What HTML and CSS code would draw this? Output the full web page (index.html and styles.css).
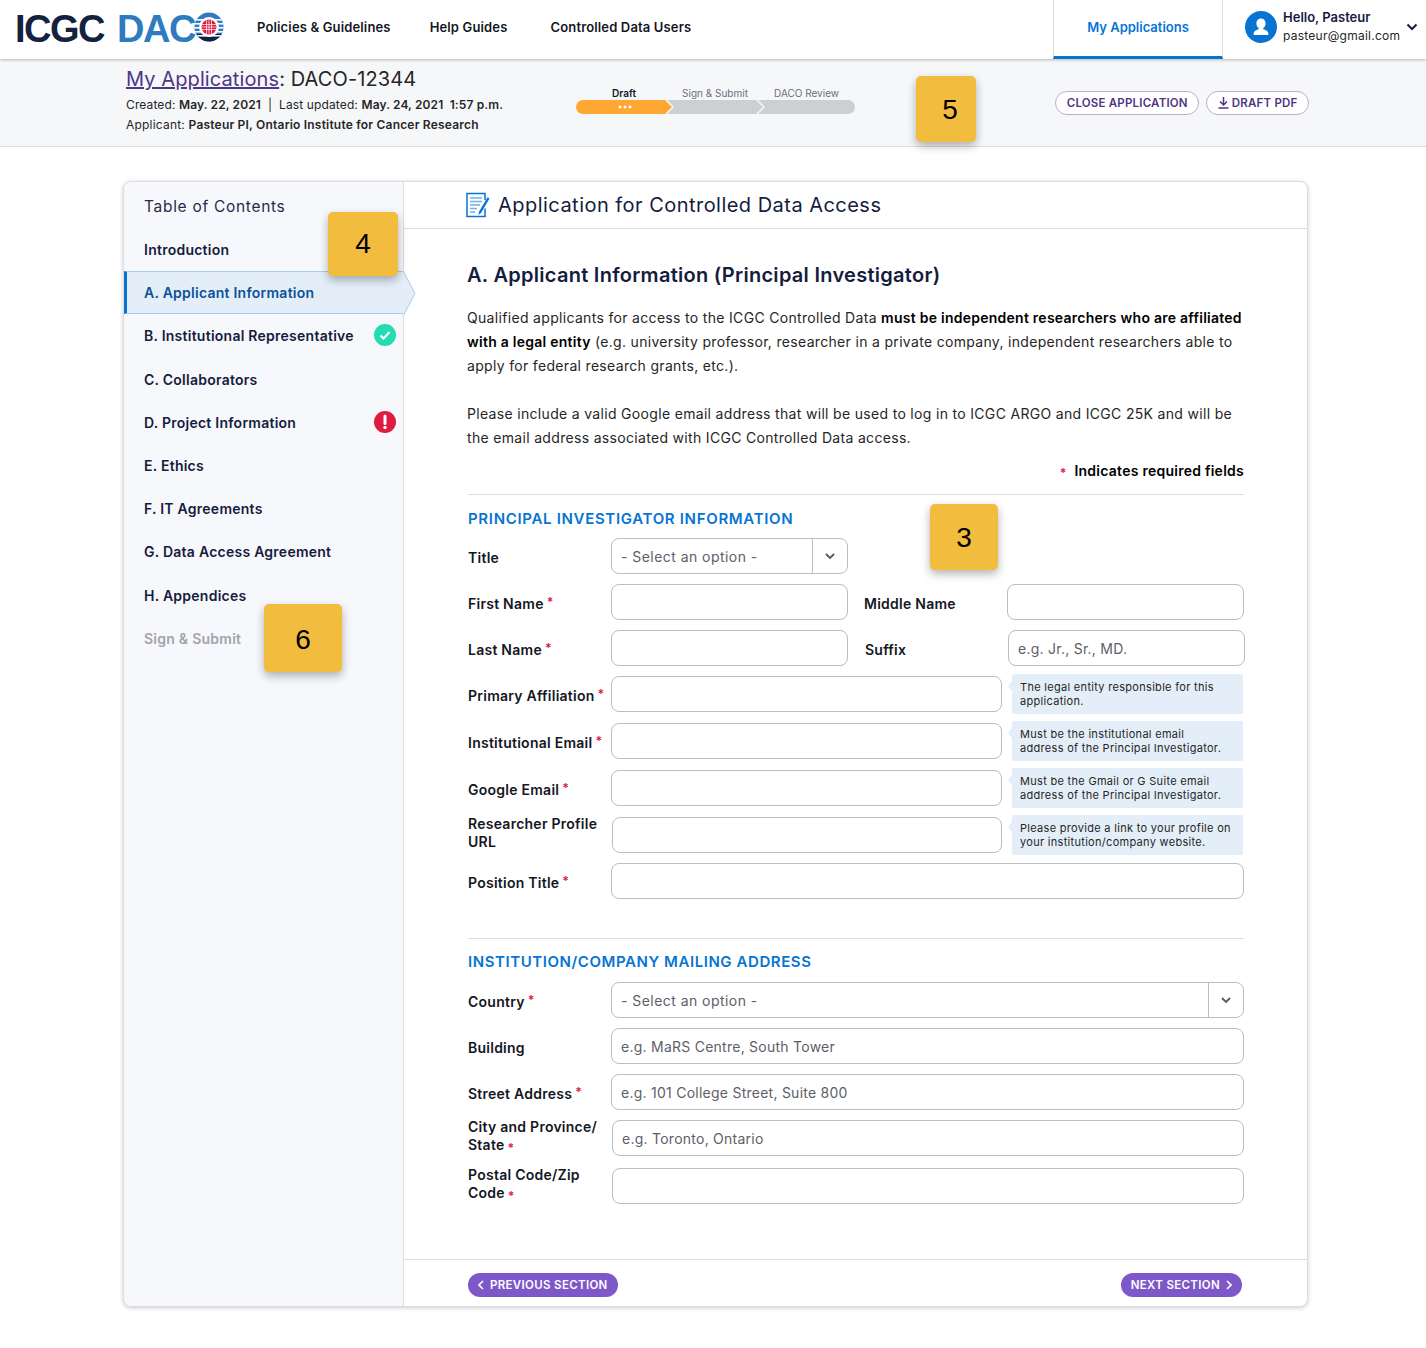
FILE: index.html
```html
<!DOCTYPE html>
<html lang="en">
<head>
    <meta charset="UTF-8">
    <meta name="viewport" content="width=device-width, initial-scale=1.0">
    <title>Application for Controlled Data Access</title>
    <link rel="stylesheet" href="styles.css">
</head>
<body>

    <header class="topbar">
        <div class="logo">
            <span class="logo-dark">ICGC</span>
            <span class="logo-blue">DAC</span>
            <svg class="globe" width="30" height="30" viewBox="0 0 30 30">
                <defs><clipPath id="globeClip"><circle cx="15" cy="15" r="14.5"/></clipPath></defs>
                <g clip-path="url(#globeClip)">
                    <rect width="30" height="15" fill="#2f7bbf"/>
                    <rect y="15" width="30" height="15" fill="#2f7bbf"/>
                    <rect y="22" width="30" height="8" fill="#14213f"/>
                    <rect y="7" width="30" height="1.6" fill="#fff"/>
                    <rect y="11" width="30" height="1.6" fill="#fff"/>
                    <rect y="15" width="30" height="1.6" fill="#fff"/>
                    <rect y="19" width="30" height="1.6" fill="#fff"/>
                    <rect y="23" width="30" height="1.6" fill="#fff"/>
                </g>
                <circle cx="15" cy="15" r="10" fill="#fff"/>
                <circle cx="15" cy="15" r="7.5" fill="#df1b41"/>
                <path d="M7.5 12.5h15M7.5 15h15M7.5 17.5h15M12.5 7.5v15M15 7.5v15M17.5 7.5v15" stroke="#fff" stroke-width=".7" fill="none"/>
            </svg>
        </div>
        <nav class="main-nav">
            <a class="nav-policies">Policies &amp; Guidelines</a>
            <a class="nav-help">Help Guides</a>
            <a>Controlled Data Users</a>
        </nav>
        <a class="tab-active">My Applications</a>
        <div class="user-menu">
            <svg class="avatar" width="32" height="32" viewBox="0 0 32 32">
                <circle cx="16" cy="16" r="16" fill="#0774d3"/>
                <path d="M16 7.5c-2.9 0-4.6 2.2-4.6 4.9 0 2 .9 3.7 2.3 4.7v1.1c-1.9.7-5 1.6-5 4.1v1.7h14.6v-1.7c0-2.5-3.100-3.400-5-4.100v-1.100c1.400-1 2.300-2.700 2.300-4.700 0-2.700-1.700-4.900-4.600-4.900z" fill="#fff"/>
            </svg>
            <div class="user-text">
                <div class="user-name">Hello, Pasteur</div>
                <div class="user-mail">pasteur@gmail.com</div>
            </div>
            <svg class="user-caret" width="12" height="8" viewBox="0 0 12 8"><path d="M1.500 1.500 6 6l4.500-4.500" fill="none" stroke="#151c3d" stroke-width="2"/></svg>
        </div>
    </header>

    <section class="subbar">
        <div class="app-info">
            <h1><a>My Applications</a>: DACO-12344</h1>
            <p class="app-dates">Created: <b>May. 22, 2021</b> &nbsp;|&nbsp; Last updated: <b>May. 24, 2021 &nbsp;1:57 p.m.</b></p>
            <p>Applicant: <b>Pasteur PI, Ontario Institute for Cancer Research</b></p>
        </div>
        <div class="stepper">
            <div class="step-labels">
                <span class="step-current">Draft</span>
                <span>Sign &amp; Submit</span>
                <span>DACO Review</span>
            </div>
            <svg width="279" height="14" viewBox="0 0 279 14">
                <path d="M90 0h182a7 7 0 0 1 0 14H90z" fill="#cecfd3"/>
                <path d="M7 0h83l7 7-7 7H7a7 7 0 0 1 0-14z" fill="#ffa733"/>
                <path d="M90 0l7 7-7 7M181 0l7 7-7 7" fill="none" stroke="#f6f7f9" stroke-width="1.500"/>
                <circle cx="44" cy="7" r="1.500" fill="#fff"/><circle cx="49" cy="7" r="1.500" fill="#fff"/><circle cx="54" cy="7" r="1.500" fill="#fff"/>
            </svg>
        </div>
        <div class="app-actions">
            <button class="btn-outline">CLOSE APPLICATION</button>
            <button class="btn-outline btn-pdf">
                <svg width="11" height="12" viewBox="0 0 11 12"><path d="M5.500 0v7.500M2 4.500l3.500 3.500L9 4.500M.5 11h10" fill="none" stroke="#4f3585" stroke-width="1.500"/></svg>
                DRAFT PDF
            </button>
        </div>
    </section>

    <main class="card">
        <aside class="sidebar">
            <h3>Table of Contents</h3>
            <ul class="toc">
                <li>Introduction</li>
                <li class="active">
                    A. Applicant Information
                    <svg class="active-tip" width="13" height="45" viewBox="0 0 13 45"><path d="M0 .5h.5L12 22.500.5 44.500H0" fill="#e4eef8" stroke="#a2cdf1"/></svg>
                </li>
                <li>B. Institutional Representative
                    <svg class="toc-icon" width="22" height="22" viewBox="0 0 22 22"><circle cx="11" cy="11" r="11" fill="#24dbb4"/><path d="M6.500 11.500l3 3 6-6.500" fill="none" stroke="#fff" stroke-width="2.200"/></svg>
                </li>
                <li>C. Collaborators</li>
                <li>D. Project Information
                    <svg class="toc-icon" width="22" height="22" viewBox="0 0 22 22"><circle cx="11" cy="11" r="11" fill="#df1b41"/><path d="M11 5v7.500" stroke="#fff" stroke-width="3" stroke-linecap="round"/><circle cx="11" cy="16.500" r="1.700" fill="#fff"/></svg>
                </li>
                <li>E. Ethics</li>
                <li>F. IT Agreements</li>
                <li>G. Data Access Agreement</li>
                <li>H. Appendices</li>
                <li class="disabled">Sign &amp; Submit</li>
            </ul>
        </aside>

        <div class="content">
            <div class="content-head">
                <svg width="25" height="26" viewBox="0 0 25 26">
                    <path d="M19 8V1.500H1v23h18v-8" fill="#fff" stroke="#0774d3" stroke-width="1.500"/>
                    <path d="M4 6h12M4 9.500h12M4 13h10M4 16.500h7M4 20h5" stroke="#6db0ea" stroke-width="1.500"/>
                    <path d="M23.500 6.500 15 21l-2.500 2 .5-3.200 8.500-14.500z" fill="#0774d3"/>
                </svg>
                <h2>Application for Controlled Data Access</h2>
            </div>

            <div class="content-body">
                <h2 class="section-title">A. Applicant Information (Principal Investigator)</h2>
                <p class="intro">Qualified applicants for access to the ICGC Controlled Data <b>must be independent researchers who are affiliated with a legal entity</b> (e.g. university professor, researcher in a private company, independent researchers able to apply for federal research grants, etc.).</p>
                <p class="intro">Please include a valid Google email address that will be used to log in to ICGC ARGO and ICGC 25K and will be the email address associated with ICGC Controlled Data access.</p>
                <p class="required-note"><span class="req">*</span> Indicates required fields</p>

                <h4 class="form-heading">PRINCIPAL INVESTIGATOR INFORMATION</h4>

                <div class="form-row">
                    <label>Title</label>
                    <div class="select half"><span>- Select an option -</span><i><svg width="10" height="7" viewBox="0 0 10 7"><path d="M1 1l4 4 4-4" fill="none" stroke="#525767" stroke-width="1.800"/></svg></i></div>
                </div>
                <div class="form-row">
                    <label>First Name<span class="req">*</span></label>
                    <input class="half" type="text">
                    <label class="label-second">Middle Name</label>
                    <input class="half" type="text">
                </div>
                <div class="form-row">
                    <label>Last Name<span class="req">*</span></label>
                    <input class="half" type="text">
                    <label class="label-second label-suffix">Suffix</label>
                    <input class="half" type="text" placeholder="e.g. Jr., Sr., MD.">
                </div>
                <div class="form-row row-tip">
                    <label>Primary Affiliation<span class="req">*</span></label>
                    <input class="with-tip" type="text">
                    <div class="tip">The legal entity responsible for this application.</div>
                </div>
                <div class="form-row row-tip">
                    <label>Institutional Email<span class="req">*</span></label>
                    <input class="with-tip" type="text">
                    <div class="tip">Must be the institutional email<br>address of the Principal Investigator.</div>
                </div>
                <div class="form-row row-tip">
                    <label>Google Email<span class="req">*</span></label>
                    <input class="with-tip" type="text">
                    <div class="tip">Must be the Gmail or G Suite email<br>address of the Principal Investigator.</div>
                </div>
                <div class="form-row row-tip row-tall">
                    <label class="two-line">Researcher Profile URL</label>
                    <input class="with-tip" type="text">
                    <div class="tip">Please provide a link to your profile on your institution/company website.</div>
                </div>
                <div class="form-row">
                    <label>Position Title<span class="req">*</span></label>
                    <input type="text">
                </div>

                <h4 class="form-heading second">INSTITUTION/COMPANY MAILING ADDRESS</h4>

                <div class="form-row">
                    <label>Country<span class="req">*</span></label>
                    <div class="select"><span>- Select an option -</span><i><svg width="10" height="7" viewBox="0 0 10 7"><path d="M1 1l4 4 4-4" fill="none" stroke="#525767" stroke-width="1.800"/></svg></i></div>
                </div>
                <div class="form-row">
                    <label>Building</label>
                    <input type="text" placeholder="e.g. MaRS Centre, South Tower">
                </div>
                <div class="form-row">
                    <label>Street Address<span class="req">*</span></label>
                    <input type="text" placeholder="e.g. 101 College Street, Suite 800">
                </div>
                <div class="form-row row-wide">
                    <label class="two-line">City and Province/ State<span class="req req-low">*</span></label>
                    <input type="text" placeholder="e.g. Toronto, Ontario">
                </div>
                <div class="form-row">
                    <label class="two-line">Postal Code/Zip Code<span class="req req-low">*</span></label>
                    <input type="text">
                </div>
            </div>

            <div class="content-foot">
                <button class="btn-purple">
                    <svg width="6" height="10" viewBox="0 0 6 10"><path d="M5 1 1 5l4 4" fill="none" stroke="#fff" stroke-width="1.600"/></svg>
                    PREVIOUS SECTION
                </button>
                <button class="btn-purple">
                    NEXT SECTION
                    <svg width="6" height="10" viewBox="0 0 6 10"><path d="M1 1l4 4-4 4" fill="none" stroke="#fff" stroke-width="1.600"/></svg>
                </button>
            </div>
        </div>
    </main>

    <div class="marker marker-5">5</div>
    <div class="marker marker-4">4</div>
    <div class="marker marker-3">3</div>
    <div class="marker marker-6">6</div>

</body>
</html>
```

FILE: styles.css
```css
* {
    box-sizing: border-box;
}
body {
    position: relative;
    margin: 0;
    background: white;
    color: #262626;
    font-family: Inter, 'Noto Sans', sans-serif;
    font-size: 14px;
}
h1, h2, h3, h4, p, ul {
    margin: 0;
    padding: 0;
}

/* top bar */
.topbar {
    position: relative;
    display: flex;
    align-items: center;
    height: 59px;
    background: white;
    box-shadow: 0 1px 3px rgba(0, 0, 0, 0.25);
}
.logo {
    display: flex;
    align-items: center;
    width: 257px;
    padding-left: 15px;
    font-family: 'Liberation Sans', Arial, sans-serif;
    font-size: 38px;
    font-weight: bold;
    letter-spacing: -1.5px;
}
.logo-dark {
    color: #14213f;
    margin-right: 13px;
}
.logo-blue {
    color: #2f7bbf;
}
.globe {
    margin-left: -1px;
    margin-top: -5px;
}
.main-nav {
    display: flex;
    flex: 1;
    margin-top: -5px;
    font-size: 13px;
    font-weight: 600;
    letter-spacing: 0.15px;
    color: #14171f;
}
.nav-policies {
    margin-right: 39px;
}
.nav-help {
    margin-right: 43px;
}
.tab-active {
    display: flex;
    align-items: center;
    justify-content: center;
    width: 170px;
    height: 59px;
    padding-bottom: 2px;
    border-left: 1px solid #dcdde1;
    border-right: 1px solid #dcdde1;
    border-bottom: 3px solid #0774d3;
    color: #0774d3;
    font-size: 13px;
    font-weight: 600;
}
.user-menu {
    display: flex;
    align-items: center;
    width: 203px;
    padding-left: 22px;
    margin-top: -6px;
}
.user-text {
    margin-left: 6px;
    width: 123px;
}
.user-name {
    font-size: 13px;
    font-weight: 600;
    color: #151c3d;
    line-height: 18px;
}
.user-mail {
    font-size: 12px;
    letter-spacing: 0.25px;
    color: #262626;
    line-height: 19px;
}

/* application summary */
.subbar {
    display: flex;
    height: 88px;
    padding: 0 117px 0 126px;
    background: #f6f7f9;
    border-bottom: 1px solid #dcdde1;
}
.app-info {
    width: 450px;
    padding-top: 8px;
    font-size: 12px;
    letter-spacing: 0.2px;
    color: #262626;
}
.app-info h1 {
    font-size: 20px;
    font-weight: 400;
    line-height: 24px;
    margin-bottom: 4px;
    letter-spacing: 0.1px;
}
.app-info h1 a {
    color: #4f3585;
    text-decoration: underline;
}
.app-info p {
    line-height: 20px;
}
.app-info .app-dates {
    letter-spacing: 0.12px;
}
.app-info b {
    font-weight: 600;
}
.stepper {
    width: 279px;
    padding-top: 28px;
}
.stepper svg {
    display: block;
}
.step-labels {
    display: grid;
    grid-template-columns: 96px 86px 97px;
    height: 13px;
    line-height: 12px;
    font-size: 10px;
    color: #6d6f78;
    text-align: center;
    white-space: nowrap;
}
.step-current {
    color: #14171f;
    font-weight: 600;
}
.app-actions {
    display: flex;
    gap: 7px;
    margin-left: auto;
    padding-top: 32px;
}
.btn-outline {
    display: flex;
    align-items: center;
    gap: 3px;
    height: 24px;
    padding: 0 10.5px;
    background: white;
    border: 1px solid #b9aed0;
    border-radius: 12px;
    color: #4f3585;
    font-family: inherit;
    font-size: 11.5px;
    font-weight: 600;
    letter-spacing: 0.2px;
}

/* main card */
.card {
    display: flex;
    width: 1185px;
    margin: 34px 0 41px 123px;
    background: white;
    border: 1px solid #dcdde1;
    border-radius: 8px;
    box-shadow: 0 1px 4px rgba(0, 0, 0, 0.2);
}
.sidebar {
    flex: 0 0 280px;
    background: #f7f8fb;
    border-right: 1px solid #dcdde1;
    border-radius: 8px 0 0 8px;
}
.sidebar h3 {
    padding: 15px 0 0 20px;
    height: 46px;
    font-size: 15.5px;
    font-weight: 400;
    line-height: 19px;
    color: #262b4a;
    letter-spacing: 0.7px;
}
.toc {
    list-style: none;
    margin-top: 0;
}
.toc li {
    position: relative;
    display: flex;
    align-items: center;
    height: 43.2px;
    padding-left: 20px;
    font-size: 14px;
    letter-spacing: 0.25px;
    font-weight: 600;
    color: #151c3d;
}
.toc li.active {
    background: #e4eef8;
    color: #0a5298;
    border-top: 1px solid #a2cdf1;
    border-bottom: 1px solid #a2cdf1;
    border-left: 3px solid #0774d3;
    padding-left: 17px;
}
.toc li.disabled {
    color: #a1a3ad;
}
.active-tip {
    position: absolute;
    left: 276px;
    top: -1px;
}
.toc-icon {
    position: absolute;
    left: 250px;
    top: 10px;
}

.content {
    flex: 1;
    min-width: 0;
}
.content-head {
    display: flex;
    align-items: center;
    gap: 7px;
    height: 47px;
    padding-left: 62px;
    border-bottom: 1px solid #dcdde1;
}
.content-head h2 {
    font-size: 20px;
    font-weight: 400;
    color: #151c3d;
    letter-spacing: 0.47px;
}
.content-body {
    padding: 34px 63px 45px 63px;
}
.section-title {
    font-size: 20px;
    font-weight: 600;
    line-height: 24px;
    margin-bottom: 19px;
    letter-spacing: 0.28px;
    color: #151c3d;
}
.intro {
    width: 782px;
    font-size: 14px;
    letter-spacing: 0.32px;
    line-height: 24px;
    margin-bottom: 24px;
}
.intro b {
    font-weight: 600;
    letter-spacing: 0.25px;
    color: black;
}
.required-note {
    margin-top: -11px;
    text-align: right;
    font-size: 14px;
    font-weight: 600;
    letter-spacing: 0.25px;
    line-height: 16px;
    color: black;
}
.form-heading {
    margin: 14px 0 9px 1px;
    padding-top: 14px;
    border-top: 1px solid #dcdde1;
    color: #0774d3;
    font-size: 15px;
    font-weight: 600;
    line-height: 20px;
    letter-spacing: 0.68px;
}
.form-heading.second {
    margin-top: 39px;
    margin-bottom: 10px;
    padding-top: 13px;
    letter-spacing: 0.57px;
}

/* form rows */
.form-row {
    display: flex;
    align-items: center;
    height: 36px;
    margin: 0 0 10px 1px;
}
.row-tip {
    margin-bottom: 11px;
}
.row-tall {
    margin-bottom: 10px;
}
.row-wide {
    margin-bottom: 12px;
}
.form-row label {
    flex: 0 0 143px;
    padding-top: 2px;
    font-size: 14px;
    font-weight: 600;
    letter-spacing: 0.25px;
    color: #14171f;
}
.form-row .two-line {
    line-height: 18px;
    flex-basis: 144px;
    padding: 0 10px 0 0;
    margin-bottom: 4px;
}
.form-row .label-second {
    flex: 0 0 159px;
    padding-left: 16px;
}
.form-row .label-suffix {
    padding-left: 17px;
    flex-basis: 160px;
}
.req {
    color: #df1b41;
    font-size: 12px;
    font-weight: 700;
    margin-left: 3px;
    position: relative;
    top: -3px;
}
.req-low {
    top: 2px;
    margin-left: 3px;
}
.required-note .req {
    top: 1px;
    margin-right: 4px;
}
input, .select {
    flex: 1;
    min-width: 0;
    height: 36px;
    background: white;
    border: 1px solid #bcbdc2;
    border-radius: 8px;
    padding: 0 9px;
    font-family: inherit;
    font-size: 14px;
    letter-spacing: 0.25px;
}
input::placeholder {
    color: #5e6068;
    opacity: 1;
}
input.half, .select.half {
    flex: 0 0 237px;
}
input.with-tip {
    flex: 0 0 391px;
}
.row-tall input.with-tip {
    flex-basis: 390px;
}
.select {
    display: flex;
    align-items: center;
    justify-content: space-between;
    padding: 0 0 0 9px;
    color: #5e6068;
    letter-spacing: 0.45px;
}
.select i {
    display: flex;
    align-items: center;
    justify-content: center;
    width: 35px;
    height: 100%;
    border-left: 1px solid #bcbdc2;
}
.tip {
    position: relative;
    flex: 0 0 231px;
    margin-left: 10px;
    height: 40px;
    padding: 6px 8px;
    background: #e4eef8;
    border-radius: 2px;
    font-size: 11px;
    letter-spacing: 0.3px;
    line-height: 14px;
    color: #262626;
}
.tip::before {
    content: "";
    position: absolute;
    left: -4px;
    top: 7px;
    border-top: 5px solid transparent;
    border-bottom: 5px solid transparent;
    border-right: 4px solid #e4eef8;
}

.content-foot {
    display: flex;
    justify-content: space-between;
    height: 47px;
    padding: 13px 65px 0 64px;
    border-top: 1px solid #dcdde1;
}
.btn-purple {
    display: flex;
    align-items: center;
    gap: 6px;
    height: 24px;
    padding: 0 10px;
    background: #7e57c8;
    border: none;
    border-radius: 12px;
    color: white;
    font-family: inherit;
    font-size: 11.5px;
    font-weight: 600;
    letter-spacing: 0.33px;
}

/* numbered markers that sit over the page */
.marker {
    position: absolute;
    display: flex;
    align-items: center;
    justify-content: center;
    padding-top: 1px;
    background: #f2bc3f;
    border-radius: 5px;
    box-shadow: 0 4px 10px rgba(0, 0, 0, 0.3);
    color: black;
    font-family: 'Liberation Sans', Arial, sans-serif;
    font-size: 28px;
}
.marker-5 {
    left: 916px;
    top: 76px;
    width: 60px;
    height: 66px;
    padding-left: 8px;
}
.marker-4 {
    left: 328px;
    top: 212px;
    width: 70px;
    height: 64px;
    padding-top: 0;
}
.marker-3 {
    left: 930px;
    top: 504px;
    width: 68px;
    height: 66px;
}
.marker-6 {
    left: 264px;
    top: 604px;
    width: 78px;
    height: 68px;
    padding-top: 3px;
}
```
